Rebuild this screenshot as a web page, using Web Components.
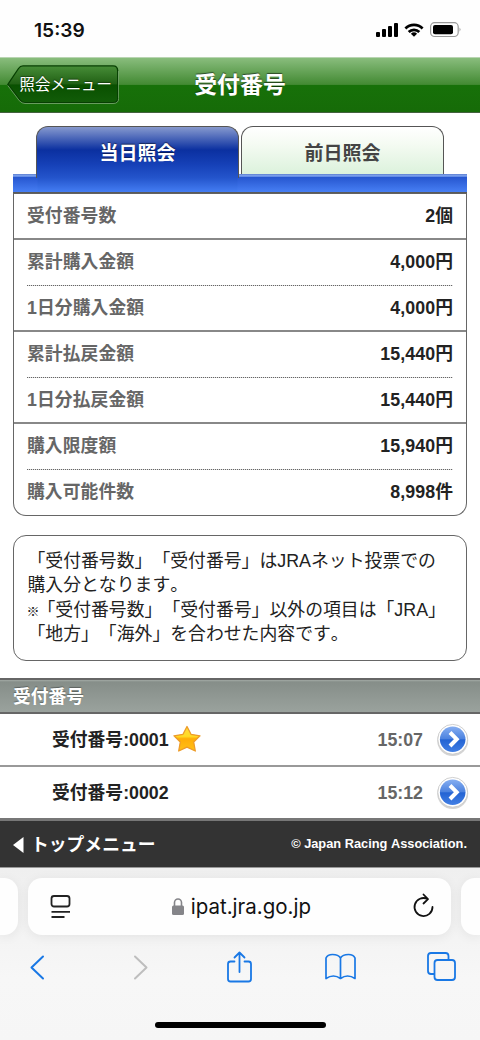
<!DOCTYPE html>
<html lang="ja"><head><meta charset="utf-8"><title>受付番号</title>
<style>
html,body{margin:0;padding:0}
body{width:480px;height:1040px;overflow:hidden;background:#fff;font-family:"Liberation Sans","Noto Sans CJK JP",sans-serif;font-size:17.8px;color:#222;text-spacing-trim:space-all;font-kerning:none}
</style></head><body>
<ipat-screen></ipat-screen>
<script>
const define=(name,html)=>customElements.define(name,class extends HTMLElement{
  constructor(){super();const t=document.createElement('template');t.innerHTML=html;
    this.attachShadow({mode:'open'}).appendChild(t.content.cloneNode(true));}
});

define('status-bar',`<style>
:host{display:flex;height:57px;box-sizing:border-box;padding:4px 19px 0 34px;align-items:center;justify-content:space-between;background:#fefefe}
.time{font:600 19.2px Inter,sans-serif;color:#111}
svg{display:block}
</style><span class="time"><slot></slot></span>
<svg width="86" height="18" viewBox="375 21 86 18">
<g fill="#000"><rect x="376" y="32" width="4" height="5" rx="1"/><rect x="382" y="29" width="4" height="8" rx="1"/><rect x="388" y="26" width="4" height="11" rx="1"/><rect x="394" y="23" width="4" height="14" rx="1"/></g>
<g fill="none" stroke="#000" stroke-width="2.7"><path d="M405.400 28.500A12.200 12.200 0 0 1 422.600 28.500"/><path d="M408.700 32A7.500 7.500 0 0 1 419.300 32"/></g><path d="M410.900 33.700a4.500 4.500 0 0 1 6.200 0L414 36.800z"/>
<rect x="430.600" y="22.700" width="27.600" height="13.800" rx="4" fill="none" stroke="#999" stroke-width="1.200"/><rect x="433" y="25" width="20" height="9.300" rx="2" fill="#000"/><path d="M459.600 27.500q1.600 2.100 0 4.200z" fill="#888"/>
</svg>`);

define('page-header',`<style>
:host{display:grid;grid-template-columns:112px 1fr 112px;align-items:center;height:56px;box-sizing:border-box;padding:0 7px 1px;border-top:1px solid #b9d5b2;border-bottom:1px solid #44613f;background:linear-gradient(#89bd7d 0,#438a33 49%,#177109 50%,#166b08 100%)}
.back{display:grid;align-items:center;height:39px;margin-top:1px}
.back>*{grid-area:1/1}
span{font-size:15.4px;color:#fff;padding-left:12.500px;white-space:nowrap;line-height:20px;text-shadow:0 -1px 1px #0006}
h1{margin:0;padding-top:1px;font-size:22.900px;line-height:30px;text-align:center;color:#fff;text-shadow:0 -1px 1px #0008}
</style><div class="back"><svg width="112" height="39"><defs><linearGradient id="g" x2="0" y2="1"><stop stop-color="#478d38"/><stop offset=".5" stop-color="#205f13"/><stop offset=".51" stop-color="#095000"/><stop offset="1" stop-color="#125c08"/></linearGradient></defs><path d="M16 .9H106Q110.700 .9 110.700 6V33.500Q110.700 37.700 106 37.700H18Q15 37.700 13 35.200L.8 19.500 11.500 3.500Q13.200 .9 16 .9Z" fill="url(#g)" stroke="#073f02" stroke-width="1.300"/><path d="M111.600 6V33.500Q111.600 38.500 106 38.500H18Q15 38.500 12.300 35.700L.8 20.500" fill="none" stroke="#8db684" stroke-width=".7"/></svg><span><slot name="back"></slot></span></div><h1><slot></slot></h1>`);

define('day-tabs',`<style>
:host{display:flex;height:68px;box-sizing:border-box;padding:0 23px;gap:2px;background:linear-gradient(#fff0 48px,#5d7fd0 48px,#82a7f2 50px,#2757d0 51.500px,#477ff4 66px,#555 66px,#666 68px)}
div{box-sizing:border-box;width:203px;border:1.500px solid #555;border-bottom:0;border-radius:12px 12px 0 0;text-align:center;font-weight:700;font-size:19px;line-height:54px}
.on{height:66px;color:#fff;background:linear-gradient(#8798cb 0,#7187c7 4px,#0b30a0 23px,#1641b8 38px,#2455cc 51px,#447df3 65px);text-shadow:0 -1px 1px #0007;clip-path:polygon(0 0,100% 0,100% 52px,201.500px 52px,201.500px 100%,1.500px 100%,1.500px 52px,0 52px)}
.off{height:48px;color:#444;background:linear-gradient(#fff,#f5fbf3 35%,#dcf2dc)}
</style><div class="on"><slot name="today"></slot></div><div class="off"><slot name="previous"></slot></div>`);

define('summary-row',`<style>
:host{display:flex;height:46px;box-sizing:border-box;padding:0 13px;justify-content:space-between;align-items:center;font-weight:700;border-bottom:2px solid #888}
:host([dotted]){border-bottom:0;padding-bottom:2px;background:repeating-linear-gradient(90deg,#666 0 1px,#ddd 1px 2px) 13px 45px/426px 1px no-repeat}
:host([last]){height:45px;border-bottom:0;padding-bottom:1px}
.l{color:#666;letter-spacing:.08px}.v{color:#222;letter-spacing:.08px}
span{line-height:24px;white-space:nowrap}
</style><span class="l"><slot></slot></span><span class="v"><slot name="value"></slot></span>`);

define('info-box',`<style>
:host{display:block;box-sizing:border-box;border:1.500px solid #666;border-radius:13px;background:#fff}
:host([summary]){border-top:0;border-radius:0 0 13px 13px}
</style><slot></slot>`);

define('section-title',`<style>
:host{display:block;height:36px;box-sizing:border-box;border-top:2px solid #666;border-bottom:2px solid #666;padding-left:13px;background:linear-gradient(#a3aaa5 0,#868e89 2px,#9aa29d);color:#fff;font-weight:700;line-height:34px;text-shadow:0 -1px 1px #0005}
</style><slot></slot>`);

define('receipt-row',`<style>
:host{display:flex;align-items:center;height:53px;box-sizing:border-box;padding:0 10px 0 52px;background:#fff;border-bottom:2px solid #999;font-weight:700;line-height:24px}
:host([last]){height:51px;border-bottom:0}
.star{display:none;margin:0 0 2px 3px}:host([starred]) .star{display:block}
.label{padding-top:1px}
.time{margin-left:auto;margin-right:12px;color:#666;padding-top:1px}
svg{display:block;flex:none}
</style><span class="label"><slot></slot></span>
<svg class="star" width="30" height="30"><defs><linearGradient id="s" x2="0" y2="1"><stop stop-color="#ffd83e"/><stop offset=".4" stop-color="#ffdc25"/><stop offset=".5" stop-color="#ffad07"/><stop offset="1" stop-color="#ffc118"/></linearGradient></defs><path d="M15 2.500 19 10.300 28 11.800 21.700 18 23.300 27 15 23.200 6.700 27 8.300 18 2 11.800 11 10.300Z" fill="url(#s)" stroke="#ed9b29" stroke-width="1.300" stroke-linejoin="round"/></svg>
<span class="time"><slot name="time"></slot></span>
<svg width="35" height="35"><defs><linearGradient id="b" x2="0" y2="1"><stop stop-color="#86aef1"/><stop offset=".48" stop-color="#4c82df"/><stop offset=".52" stop-color="#2363d3"/><stop offset="1" stop-color="#427fe4"/></linearGradient></defs><circle cx="17.700" cy="18.500" r="15.500" fill="#aaa" opacity=".5"/><circle cx="17.700" cy="17.300" r="14.900" fill="#fff" stroke="#c4c4c4" stroke-width=".8"/><circle cx="17.700" cy="17.300" r="12.800" fill="url(#b)"/><path d="M15 10.500 21.700 17.200 15 24" fill="none" stroke="#fff" stroke-width="4"/></svg>`);

define('site-footer',`<style>
:host{display:flex;align-items:center;justify-content:space-between;height:50px;box-sizing:border-box;padding:0 13px 1px;border-top:3px solid #777;border-bottom:1px solid #999;background:#333;color:#fff;font-weight:700}
.top{display:flex;align-items:center;gap:7px;line-height:22px;margin-top:2px}
.copy{font-size:12.800px;white-space:nowrap}
svg{display:block}
</style><span class="top"><svg width="11" height="16"><path d="M0 8 10.500 0V16Z" fill="#fff"/></svg><slot></slot></span><span class="copy"><slot name="copy"></slot></span>`);

define('browser-bar',`<style>
:host{display:block;height:172px;background:linear-gradient(#efefef,#f3f3f3 60px,#f7f7f7 110px,#f6f6f6)}
.tabs{display:flex;gap:10px;height:67px;box-sizing:border-box;padding-top:10px;overflow:visible}
.card{height:57px;background:#fefefe;border-radius:0 14px 14px 0;width:18.400px;box-shadow:0 2px 12px #0001}
.url{border-radius:14px;width:423px;box-sizing:border-box;padding:0 15px 0 21px;display:flex;align-items:center;justify-content:space-between}
.end{border-radius:14px 0 0 14px}
.addr{display:flex;align-items:center;gap:7px;font:400 20.500px Inter,sans-serif;color:#111;margin-left:-1px}
nav{display:flex;justify-content:space-between;align-items:center;height:42px;margin-top:11px;padding:0 23px}
.home{width:171px;height:6px;border-radius:3px;background:#000;margin:34px auto 0}
svg{display:block;overflow:visible}
</style><div class="tabs"><div class="card"></div><div class="card url">
<svg width="22" height="26" fill="none" stroke="#222" stroke-width="1.800"><rect x="2.500" y="2" width="18" height="10.500" rx="2.500"/><path d="M2.500 17.800H21M2.500 23H15.500"/></svg>
<span class="addr"><svg width="12" height="18"><rect y="7.500" width="12" height="9.500" rx="1.500" fill="#858589"/><path d="M2.500 8V4.500a3.500 3.500 0 0 1 7 0V8" fill="none" stroke="#858589" stroke-width="1.600"/></svg><slot></slot></span>
<svg width="24" height="26" fill="none" stroke="#111" stroke-width="1.800" stroke-linecap="round" stroke-linejoin="round"><path d="M15.500 5A9 9 0 1 0 20.500 13M11.500 .5 16 5.200 11.500 9.500"/></svg>
</div><div class="card end"></div></div>
<nav><svg width="28" height="32" fill="none" stroke="#1978e5" stroke-width="2" stroke-linecap="round" stroke-linejoin="round"><path d="M20 5.500 8.500 16.500 20 27.500"/></svg>
<svg width="28" height="32" fill="none" stroke="#bebebe" stroke-width="2" stroke-linecap="round" stroke-linejoin="round"><path d="M12 5.500 23.500 16.500 12 27.500"/></svg>
<svg width="28" height="36" fill="none" stroke="#1978e5" stroke-width="1.800" stroke-linecap="round" stroke-linejoin="round"><path transform="translate(3 0)" d="M9.500 12.500H5.500Q3 12.500 3 15V30Q3 32.500 5.500 32.500H23.500Q26 32.500 26 30V15Q26 12.500 23.500 12.500H19.500M14.500 23V3.500M9.500 8.500 14.500 3.500 19.500 8.500"/></svg>
<svg width="32" height="32" fill="none" stroke="#1978e5" stroke-width="1.700" stroke-linejoin="round"><path transform="translate(2.500 0)" d="M16 27.500Q9 22.500 1.500 27.500V7Q3 3.500 8 3.500Q14 3.500 16 7Q18 3.500 24 3.500Q29 3.500 30.500 7V27.500Q23 22.500 16 27.500ZM16 7V27.500"/></svg>
<svg width="32" height="32" fill="none" stroke="#1978e5" stroke-width="1.800" stroke-linejoin="round"><path d="M9.500 23H6Q3 23 3 20V5Q3 2 6 2H20.500Q23.500 2 23.500 5V8.500"/><rect x="9.500" y="9" width="20.500" height="20" rx="3"/></svg></nav><div class="home"></div>`);

define('ipat-screen',`<style>
:host{display:flex;flex-direction:column;height:1040px}
main{padding:13px 13px 0;height:566px;box-sizing:border-box}
info-box{width:454px}
.note{height:126px;margin-top:19px;padding:13px 0 0 13.500px;font-size:17.850px;line-height:24.300px;white-space:nowrap}
.mark{font-size:13px;display:inline-block;width:11px;margin:0 0 0 -1px;line-height:1;font-weight:500}
</style><status-bar>15:39</status-bar><page-header><span slot="back">照会メニュー</span>受付番号</page-header>
<main><day-tabs><span slot="today">当日照会</span><span slot="previous">前日照会</span></day-tabs>
<info-box summary>
<summary-row>受付番号数<span slot="value">2個</span></summary-row>
<summary-row dotted>累計購入金額<span slot="value">4,000円</span></summary-row>
<summary-row>1日分購入金額<span slot="value">4,000円</span></summary-row>
<summary-row dotted>累計払戻金額<span slot="value">15,440円</span></summary-row>
<summary-row>1日分払戻金額<span slot="value">15,440円</span></summary-row>
<summary-row dotted>購入限度額<span slot="value">15,940円</span></summary-row>
<summary-row last>購入可能件数<span slot="value">8,998件</span></summary-row>
</info-box>
<info-box class="note">「受付番号数」「受付番号」はJRAネット投票での<br>購入分となります。<br><span class="mark">※</span>「受付番号数」「受付番号」以外の項目は「JRA」<br>「地方」「海外」を合わせた内容です。</info-box></main>
<section-title>受付番号</section-title>
<receipt-row starred>受付番号:0001<span slot="time">15:07</span></receipt-row>
<receipt-row last>受付番号:0002<span slot="time">15:12</span></receipt-row>
<site-footer>トップメニュー<span slot="copy">© Japan Racing Association.</span></site-footer>
<browser-bar>ipat.jra.go.jp</browser-bar>`);
</script></body></html>
